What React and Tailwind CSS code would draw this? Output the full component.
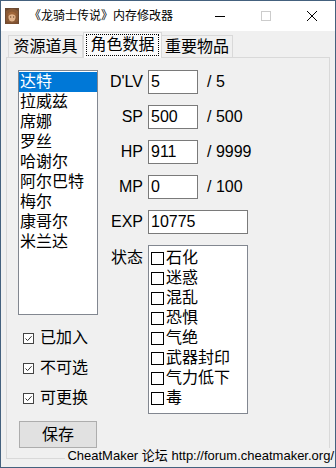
const names = ["达特", "拉威兹", "席娜", "罗丝", "哈谢尔", "阿尔巴特", "梅尔", "康哥尔", "米兰达"];
const stats = [
  ["D'LV", "5", "/ 5"],
  ["SP", "500", "/ 500"],
  ["HP", "911", "/ 9999"],
  ["MP", "0", "/ 100"],
];
const states = ["石化", "迷惑", "混乱", "恐惧", "气绝", "武器封印", "气力低下", "毒"];
const flags = ["已加入", "不可选", "可更换"];

function Portrait() {
  return (
    <svg width="14" height="16" viewBox="0 0 14 16" className="ml-[4px] shrink-0">
      <rect x="0" y="0" width="14" height="16" fill="#6b4a33" />
      <path d="M1 3 Q7 -2 13 3 L13 16 L1 16 Z" fill="#8a5a36" />
      <ellipse cx="7" cy="9" rx="3.6" ry="4.6" fill="#e2b48c" />
      <path d="M2.5 6 Q7 1 11.5 6 L11 8 Q7 4.5 3 8 Z" fill="#a0663a" />
      <rect x="5" y="8.5" width="1.2" height="1" fill="#5a3a22" />
      <rect x="8" y="8.5" width="1.2" height="1" fill="#5a3a22" />
      <path d="M1 13 Q7 17 13 13 L13 16 L1 16 Z" fill="#7a4e30" />
    </svg>
  );
}

export default function App() {
  return (
    <div className="relative w-[336px] h-[468px] border border-[#44617e] bg-[#f0f0f0] flex flex-col overflow-hidden text-black font-['Liberation_Sans','Noto_Sans_CJK_SC',sans-serif]">
      {/* title bar */}
      <div className="h-[30px] bg-white flex items-center shrink-0">
        <Portrait />
        <span className="ml-[10px] text-[12px] leading-[16px]">《龙骑士传说》内存修改器</span>
        <div className="ml-auto flex h-full">
          <div className="w-[46px] h-full flex items-center justify-center">
            <div className="w-[10px] h-px bg-black" />
          </div>
          <div className="w-[46px] h-full flex items-center justify-center">
            <div className="w-[10px] h-[10px] border border-[#cccccc]" />
          </div>
          <div className="w-[46px] h-full flex items-center justify-center">
            <svg width="10" height="10" viewBox="0 0 10 10">
              <path d="M0 0 L10 10 M10 0 L0 10" stroke="#000" strokeWidth="1" />
            </svg>
          </div>
        </div>
      </div>

      {/* body */}
      <div className="flex flex-col px-[5px]">
        {/* tabs */}
        <div className="flex items-end h-[25px] mt-[1px] pl-[2px] text-[16px]">
          <div className="w-[75px] h-[22px] border border-b-0 border-[#d9d9d9] bg-[#f0f0f0] flex items-center justify-center leading-[20px]">
            资源道具
          </div>
          <div className="relative z-10 w-[79px] h-[26px] -mb-px border border-b-0 border-[#d9d9d9] bg-[#fafafa] flex justify-center pt-[1px]">
            <span className="w-[73px] h-[22px] border border-dotted border-black flex items-center justify-center leading-[20px]">
              角色数据
            </span>
          </div>
          <div className="w-[71px] h-[22px] border border-b-0 border-l-0 border-[#d9d9d9] bg-[#f0f0f0] flex items-center justify-center leading-[20px]">
            重要物品
          </div>
        </div>

        {/* panel */}
        <div className="h-[402px] border border-[#d9d9d9] bg-[#f0f0f0] flex text-[16px]">
          {/* left column */}
          <div className="ml-[11px] mt-[12px] w-[80px] flex flex-col">
            <div className="h-[245px] border border-[#828790] bg-white pt-[1px]">
              {names.map((n, i) => (
                <div
                  key={n}
                  className={
                    i === 0
                      ? "h-[20px] leading-[20px] pl-[1px] bg-[#0078d7] text-white"
                      : "h-[20px] leading-[20px] pl-[1px]"
                  }
                >
                  {n}
                </div>
              ))}
            </div>
            <div className="mt-[13px] flex flex-col gap-[10px]">
              {flags.map((f) => (
                <div key={f} className="h-[20px] flex items-center pl-[5px]">
                  <span className="w-[11px] h-[11px] border border-[#444444] bg-white flex items-center justify-center">
                    <svg width="9" height="9" viewBox="0 0 9 9">
                      <path d="M1.5 4.5 L3.6 6.6 L7.6 2.2" fill="none" stroke="#333" strokeWidth="1" />
                    </svg>
                  </span>
                  <span className="ml-[6px] leading-[20px]">{f}</span>
                </div>
              ))}
            </div>
            <div className="mt-[13px] ml-px w-[78px] h-[27px] border border-[#adadad] bg-[#e1e1e1] flex items-center justify-center leading-[20px]">
              保存
            </div>
          </div>

          {/* right column */}
          <div className="mt-[12px] flex flex-col gap-[11px]">
            {stats.map(([label, val, max]) => (
              <div key={label} className="h-[24px] flex items-center">
                <span className="w-[45px] text-right leading-[20px]">{label}</span>
                <div className="ml-[5px] w-[50px] h-[24px] border border-[#7a7a7a] bg-white pl-[2px] leading-[22px]">
                  {val}
                </div>
                <span className="ml-[9px] leading-[20px]">{max}</span>
              </div>
            ))}
            <div className="h-[24px] flex items-center">
              <span className="w-[45px] text-right leading-[20px]">EXP</span>
              <div className="ml-[5px] w-[100px] h-[24px] border border-[#7a7a7a] bg-white pl-[2px] leading-[22px]">
                10775
              </div>
            </div>
            <div className="flex items-start">
              <span className="w-[45px] text-right leading-[20px] mt-[3px]">状态</span>
              <div className="ml-[5px] w-[100px] h-[169px] border border-[#828790] bg-white pt-[2px]">
                {states.map((s) => (
                  <div key={s} className="h-[20px] flex items-center pl-[2px]">
                    <span className="w-[13px] h-[13px] border border-black shrink-0" />
                    <span className="ml-[2px] leading-[20px]">{s}</span>
                  </div>
                ))}
              </div>
            </div>
          </div>
        </div>
      </div>

      {/* footer label overlapping panel border */}
      <div className="absolute right-[1px] bottom-[3px] bg-[#f0f0f0] pl-[2px] text-[13px] leading-[16px] whitespace-nowrap">
        CheatMaker 论坛 http://forum.cheatmaker.org/
      </div>
    </div>
  );
}
